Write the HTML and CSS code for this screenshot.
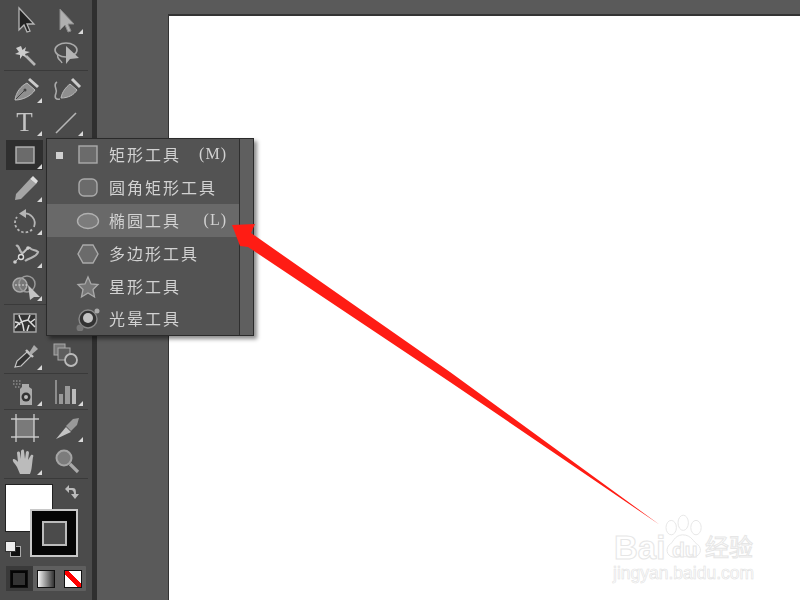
FILE: index.html
```html
<!DOCTYPE html>
<html lang="en">
<head>
  <meta charset="UTF-8" />
  <title>Tools</title>
  <link rel="stylesheet" href="styles.css">
</head>
<body>

  <div class="app">

    <!-- Toolbar -->
    <aside class="toolbar">
      <div class="tool-group">
        <div class="tool"><svg class="ico" viewBox="0 0 34 30"><path d="M11 3V25L16 20 19 27 22 26 19 19H26Z" fill="#222" stroke="#b5b5b5" stroke-width="1.3"/></svg></div>
        <div class="tool has-more"><svg class="ico" viewBox="0 0 34 30"><path d="M11 4V25L16 20 19 27 22 26 19 19H25Z" fill="#b0b0b0" stroke="#8a8a8a"/></svg></div>
        <div class="tool"><svg class="ico" viewBox="0 0 34 30"><path d="M13 8 14.500 12 18 9 17 13 22 14 17 16 19 20 14.500 17.500 12 21 12 17 7 16 11 14 8 10Z" fill="#ccc"/><path d="M18 18 27 27" stroke="#b5b5b5" stroke-width="2.600"/></svg></div>
        <div class="tool"><svg class="ico" viewBox="0 0 34 30"><ellipse cx="17" cy="12" rx="11" ry="7" fill="none" stroke="#aaa" stroke-width="1.600"/><path d="M9 16C7 21 12 22 13 25" fill="none" stroke="#aaa" stroke-width="1.500"/><path d="M17 8V26L21 21 30 20Z" fill="#b5b5b5"/></svg></div>
      </div>

      <div class="tool-group">
        <div class="tool has-more"><svg class="ico" viewBox="0 0 34 30"><path d="M7 26C8 18 13 12 19 9L27 16C23 22 15 26 7 26Z" fill="#8f8f8f" stroke="#bbb"/><path d="M21 5 30 13" stroke="#ccc" stroke-width="3"/><path d="M8 25 16 17" stroke="#444"/><circle cx="17" cy="16" r="1.500" fill="#444"/></svg></div>
        <div class="tool"><svg class="ico" viewBox="0 0 34 30"><path d="M12 24C13 18 17 13 21 10L28 16C25 21 19 24 12 24Z" fill="#8f8f8f" stroke="#bbb"/><path d="M23 5 31 13" stroke="#ccc" stroke-width="3"/><path d="M8 8C3 11 9 15 7 19 5 24 7 26 11 25" fill="none" stroke="#aaa" stroke-width="1.600"/></svg></div>
        <div class="tool has-more type-cell"><span class="type-glyph">T</span></div>
        <div class="tool has-more"><svg class="ico" viewBox="0 0 34 30"><path d="M7 26 27 6" stroke="#b5b5b5" stroke-width="1.600"/></svg></div>
        <div class="tool has-more is-active"><svg class="ico" viewBox="0 0 34 30"><rect x="8" y="7" width="18" height="16" fill="#6b6b6b" stroke="#b5b5b5" stroke-width="1.400"/></svg></div>
        <div class="tool"></div>
        <div class="tool has-more"><svg class="ico" viewBox="0 0 34 30"><path d="M8 21 22 6 28 11 13 26 7 27Z" fill="#a5a5a5"/><path d="M22 6 25 3 30 8 28 11Z" fill="#ddd"/></svg></div>
        <div class="tool"></div>
        <div class="tool has-more"><svg class="ico" viewBox="0 0 34 30"><path d="M15 7.500A10 10 0 0 1 26 21" fill="none" stroke="#b5b5b5" stroke-width="1.800"/><path d="M18 3V12L11 7.500Z" fill="#b5b5b5"/><path d="M24 23.500A10 10 0 0 1 7 17 10 10 0 0 1 9 11" fill="none" stroke="#b5b5b5" stroke-width="1.800" stroke-dasharray="2.500 2"/></svg></div>
        <div class="tool"></div>
        <div class="tool has-more"><svg class="ico" viewBox="0 0 34 30"><path d="M8 7C11 5 11 12 14 14 18 13 18 8 22 9 24 12 27 10 30 13 28 19 22 18 17 22" fill="none" stroke="#b5b5b5" stroke-width="2.200"/><path d="M7 23 20 9" stroke="#ccc"/><circle cx="13" cy="18" r="2.500" fill="#333" stroke="#ddd" stroke-width="1.400"/><circle cx="7" cy="23" r="1.800" fill="#ccc"/><circle cx="20" cy="9" r="1.800" fill="#ccc"/></svg></div>
        <div class="tool"></div>
        <div class="tool has-more"><svg class="ico" viewBox="0 0 34 30"><circle cx="12" cy="13" r="7" fill="#777" stroke="#aaa" stroke-width="1.500"/><circle cx="19" cy="12" r="8" fill="none" stroke="#999" stroke-width="1.500"/><path d="M7 13H20" stroke="#ddd" stroke-dasharray="2 1.500"/><path d="M20 13 32 25 26 25 22 28Z" fill="#c4c4c4"/></svg></div>
        <div class="tool"></div>
      </div>

      <div class="tool-group">
        <div class="tool"><svg class="ico" viewBox="0 0 34 30"><rect x="6" y="6" width="22" height="18" fill="#333" stroke="#aaa" stroke-width="1.400"/><path d="M7 20C11 14 15 13 20 12M7 14C9 14 11 15 12 17M11 7C12 12 15 13 16 23M20 12 27 19M22 7 20 12M21 17 19 23M27 11 23 14" fill="none" stroke="#ddd" stroke-width="1.500"/></svg></div>
        <div class="tool"></div>
        <div class="tool has-more"><svg class="ico" viewBox="0 0 34 30"><path d="M7 26 9 20 19 11 23 15 13 25Z" fill="#333" stroke="#c4c4c4" stroke-width="1.200"/><path d="M18 9 25 16" stroke="#c4c4c4" stroke-width="2.400"/><path d="M21 12 26 4 30 8 23 14Z" fill="#aaa"/></svg></div>
        <div class="tool"><svg class="ico" viewBox="0 0 34 30"><rect x="5" y="3" width="11" height="11" fill="#777" stroke="#aaa"/><rect x="9" y="7" width="12" height="12" fill="#5e5e5e" stroke="#aaa"/><circle cx="22" cy="19" r="6" fill="#555" stroke="#bbb" stroke-width="1.800"/></svg></div>
      </div>

      <div class="tool-group">
        <div class="tool has-more"><svg class="ico" viewBox="0 0 34 30"><path d="M14 7 H21 V10 L24 12 V28 H12 V12 L14 10Z" fill="#aaa"/><circle cx="18" cy="20" r="4.500" fill="#333"/><circle cx="18" cy="20" r="2" fill="#bbb"/><path d="M5 7H14M7 10H13M5 4H13" stroke="#aaa" stroke-dasharray="1.500 1.500"/></svg></div>
        <div class="tool has-more"><svg class="ico" viewBox="0 0 34 30"><path d="M7 3V27" stroke="#aaa" stroke-width="1.400"/><rect x="10" y="17" width="4" height="10" fill="#999"/><rect x="16" y="9" width="5" height="18" fill="#999"/><rect x="23" y="12" width="4" height="15" fill="#bbb"/></svg></div>
      </div>

      <div class="tool-group">
        <div class="tool"><svg class="ico" viewBox="0 0 34 30"><rect x="8" y="6" width="18" height="18" fill="#7a7a7a" stroke="#ccc" stroke-width="1.400"/><path d="M3 6H31M3 24H31M8 1V29M26 1V29" stroke="#c4c4c4" stroke-width="1.400" stroke-dasharray="6 16 6"/></svg></div>
        <div class="tool has-more"><svg class="ico" viewBox="0 0 34 30"><path d="M7 26 17 14 22 19Z" fill="#c4c4c4"/><path d="M17 13 24 6 30 5 28 12 22 18Z" fill="#999"/></svg></div>
        <div class="tool has-more"><svg class="ico" viewBox="0 0 34 30"><path d="M9 21C7 17 4 16 5 13 8 13 9 15 10 16L9 7C9 5 12 5 12 7L13 13 13 5C14 3 16 3 16 5L17 13 18 6C19 4 21 5 21 7L20 14 23 9C25 8 26 10 25 11 24 17 24 24 22 28H12Z" fill="#bbb"/></svg></div>
        <div class="tool"><svg class="ico" viewBox="0 0 34 30"><circle cx="15" cy="12" r="7.500" fill="#7c7c7c" stroke="#a5a5a5" stroke-width="2"/><path d="M21 18 29 26" stroke="#aaa" stroke-width="3.200"/></svg></div>
      </div>

      <!-- Fill and stroke -->
      <div class="colors">
        <div class="fill-swatch"></div>
        <div class="stroke-swatch"><div class="stroke-hole"></div></div>
        <svg class="swap-ico" viewBox="0 0 18 18"><path d="M3 6 7 2V5H11C14 5 14 8 14 11H17L13 16 9 11H12C12 9 11 7 9 7H7V10Z" fill="#bbb"/></svg>
        <svg class="default-ico" viewBox="0 0 18 18"><rect x="6.500" y="6.500" width="10" height="10" fill="#111" stroke="#aaa"/><rect x="1.500" y="1.500" width="10" height="10" fill="#eee" stroke="#333"/></svg>
      </div>

      <!-- Colour modes -->
      <div class="modes">
        <div class="mode mode-on"><div class="mode-chip chip-color"></div></div>
        <div class="mode"><div class="mode-chip chip-gradient"></div></div>
        <div class="mode"><div class="mode-chip chip-none"></div></div>
      </div>
    </aside>

    <div class="gutter"></div>

    <!-- Artboard -->
    <main class="canvas">
      <div class="page"></div>
    </main>
  </div>

  <!-- Flyout -->
  <div class="flyout">
    <ul class="flyout-list">
      <li class="flyout-row">
        <span class="bullet"></span>
        <svg class="row-ico" viewBox="0 0 24 24"><rect x="3" y="3" width="18" height="17" fill="#6b6b6b" stroke="#aaa" stroke-width="1.400"/></svg>
        <span class="row-label">矩形工具</span><span class="row-key">(M)</span>
      </li>
      <li class="flyout-row">
        <span class="bullet-off"></span>
        <svg class="row-ico" viewBox="0 0 24 24"><rect x="3" y="3" width="18" height="17" rx="5" fill="#6b6b6b" stroke="#aaa" stroke-width="1.400"/></svg>
        <span class="row-label">圆角矩形工具</span>
      </li>
      <li class="flyout-row row-hover">
        <span class="bullet-off"></span>
        <svg class="row-ico" viewBox="0 0 24 24"><ellipse cx="12" cy="12" rx="10.500" ry="7.500" fill="#7c7c7c" stroke="#b0b0b0" stroke-width="1.400"/></svg>
        <span class="row-label">椭圆工具</span><span class="row-key">(L)</span>
      </li>
      <li class="flyout-row">
        <span class="bullet-off"></span>
        <svg class="row-ico" viewBox="0 0 24 24"><path d="M7 3H17L22 12 17 21H7L2 12Z" fill="#6b6b6b" stroke="#aaa" stroke-width="1.400"/></svg>
        <span class="row-label">多边形工具</span>
      </li>
      <li class="flyout-row">
        <span class="bullet-off"></span>
        <svg class="row-ico" viewBox="0 0 24 24"><path d="M12 2 15 9 22 9.500 17 14.500 18.500 22 12 18 5.500 22 7 14.500 2 9.500 9 9Z" fill="#777" stroke="#aaa" stroke-width="1.300"/></svg>
        <span class="row-label">星形工具</span>
      </li>
      <li class="flyout-row">
        <span class="bullet-off"></span>
        <svg class="row-ico" viewBox="0 0 24 24"><circle cx="12" cy="12" r="9" fill="#333" stroke="#8a8a8a" stroke-width="1.400"/><circle cx="12" cy="11" r="5" fill="#c4c4c4"/><circle cx="21" cy="4" r="2.500" fill="#aaa"/><circle cx="4" cy="21" r="3.500" fill="#777"/></svg>
        <span class="row-label">光晕工具</span>
      </li>
    </ul>
    <div class="flyout-strip"></div>
  </div>

  <!-- Red arrow -->
  <svg class="red-arrow" viewBox="0 0 800 600">
    <polygon points="232,225 255,224 251,233 450,372 660,525 450,382 248,247 240,246" fill="#ff1c14"/>
  </svg>

  <!-- Watermark -->
  <div class="watermark">
    <svg class="paw" viewBox="0 0 60 60">
      <g fill="#fff" stroke="#e6e6e6" stroke-width="1.200">
        <ellipse cx="14" cy="17" rx="6.500" ry="9"/>
        <ellipse cx="29" cy="11" rx="6.500" ry="9.500"/>
        <ellipse cx="45" cy="17" rx="6.500" ry="9"/>
        <path d="M28 26C40 26 42 36 47 38 54 44 50 54 40 54 34 54 28 52 20 54 10 55 6 46 11 39 17 36 17 27 28 26Z"/>
      </g>
    </svg>
    <span class="wm-bai">Bai</span>
    <span class="wm-du">du</span>
    <span class="wm-cn">经验</span>
    <span class="wm-url">jingyan.baidu.com</span>
  </div>

</body>
</html>
```

FILE: styles.css
```css
/* === Body === */
body {
  margin: 0;
  width: 800px;
  height: 600px;
  overflow: hidden;
  position: relative;
  font-family: 'Noto Sans CJK SC', 'Noto Sans', sans-serif;
  background: #5a5a5a;
}

.app {
  display: flex;
  height: 600px;
}

/* === Toolbar === */
.toolbar {
  width: 92px;
  flex: none;
  box-sizing: border-box;
  padding: 3px 4px 0;
  background: #4b4b4b;
  filter: blur(0.5px);
}

.tool-group {
  display: grid;
  grid-template-columns: 41px 41px;
  grid-auto-rows: 33px;
  padding-bottom: 1px;
  margin-bottom: 1px;
  border-bottom: 1px solid #3a3a3a;
}

.tool {
  position: relative;
  display: flex;
  align-items: center;
  justify-content: center;
}

.tool.has-more::after {
  content: "";
  position: absolute;
  right: 3px;
  bottom: 2px;
  border-style: solid;
  border-width: 0 0 5px 5px;
  border-color: transparent transparent #d8d8d8 transparent;
}

.tool.is-active {
  background: #2f2f2f;
  margin: 2px 2px 1px;
}

.tool.is-active.has-more::after {
  right: 1px;
  bottom: 1px;
}

.ico {
  width: 34px;
  height: 30px;
}

.type-glyph {
  font-family: 'Liberation Serif', serif;
  font-size: 27px;
  line-height: 30px;
  color: #c4c4c4;
}

/* === Fill and stroke === */
.colors {
  position: relative;
  height: 84px;
}

.fill-swatch {
  position: absolute;
  left: 1px;
  top: 4px;
  width: 46px;
  height: 46px;
  background: #fff;
  border: 1px solid #222;
}

.stroke-swatch {
  position: absolute;
  left: 26px;
  top: 29px;
  width: 44px;
  height: 44px;
  background: #050505;
  border: 2px solid #c8c8c8;
  display: flex;
  align-items: center;
  justify-content: center;
}

.stroke-hole {
  width: 21px;
  height: 21px;
  background: #4b4b4b;
  border: 2px solid #bbb;
}

.swap-ico {
  position: absolute;
  left: 58px;
  top: 3px;
  width: 18px;
  height: 18px;
}

.default-ico {
  position: absolute;
  left: 0;
  top: 60px;
  width: 18px;
  height: 18px;
}

/* === Colour modes === */
.modes {
  display: flex;
  margin: 2px 2px 0;
  width: 80px;
  height: 25px;
  background: #5f5f5f;
  border-radius: 1px;
}

.mode {
  flex: 1;
  display: flex;
  align-items: center;
  justify-content: center;
}

.mode-on {
  background: #3a3a3a;
}

.mode-chip {
  width: 16px;
  height: 16px;
  border: 1px solid #111;
}

.chip-color {
  background: #333;
  box-shadow: inset 0 0 0 2px #050505;
}

.chip-gradient {
  background: linear-gradient(90deg, #f4f4f4, #333);
}

.chip-none {
  background: linear-gradient(135deg, #fff 38%, #f00 38%, #f00 62%, #fff 62%);
  transform: scaleX(-1);
}

/* === Gutter and artboard === */
.gutter {
  width: 5px;
  flex: none;
  background: #2f2f2f;
}

.canvas {
  flex: 1;
  padding: 14px 0 0 71px;
  background: #5a5a5a;
}

.page {
  height: 100%;
  background: #fff;
  border-top: 2px solid #333;
  border-left: 1px solid #333;
  box-sizing: border-box;
}

/* === Flyout === */
.flyout {
  position: absolute;
  left: 46px;
  top: 138px;
  width: 208px;
  height: 198px;
  box-sizing: border-box;
  display: flex;
  background: #535353;
  border: 1px solid #2a2a2a;
  box-shadow: 3px 3px 4px rgba(0, 0, 0, 0.45);
}

.flyout-list {
  flex: 1;
  list-style: none;
  margin: 0;
  padding: 0;
}

.flyout-row {
  display: flex;
  align-items: center;
  height: 33px;
  padding: 0 12px 0 9px;
  color: #d2d2d2;
}

.flyout-row:first-child {
  height: 32px;
}

.flyout-row:last-child {
  height: 32px;
}

.row-hover {
  background: #696969;
}

.bullet,
.bullet-off {
  width: 7px;
  height: 7px;
  flex: none;
  margin-right: 13px;
}

.bullet {
  background: #d0d0d0;
}

.row-ico {
  width: 24px;
  height: 24px;
  flex: none;
  margin-right: 9px;
}

.row-label {
  font-size: 16px;
  line-height: 20px;
  letter-spacing: 2px;
  margin-top: -2px;
  filter: blur(0.4px);
}

.row-key {
  margin-left: auto;
  margin-top: -2px;
  font-family: 'Liberation Serif', serif;
  font-size: 16px;
  letter-spacing: 1px;
  filter: blur(0.4px);
}

.flyout-strip {
  width: 13px;
  flex: none;
  background: #5f5f5f;
  border-left: 1px solid #2f2f2f;
}

/* === Red arrow === */
.red-arrow {
  position: absolute;
  left: 0;
  top: 0;
  width: 800px;
  height: 600px;
}

/* === Watermark === */
.watermark {
  position: absolute;
  left: 610px;
  top: 510px;
  width: 180px;
  height: 85px;
  color: #fff;
  -webkit-text-stroke: 1px #e6e6e6;
}

.watermark span {
  position: absolute;
  line-height: 1;
}

.paw {
  position: absolute;
  left: 50px;
  top: 3px;
  width: 48px;
  height: 50px;
}

.wm-bai {
  left: 4px;
  top: 21px;
  font-family: 'Liberation Sans', sans-serif;
  font-size: 33px;
  font-weight: 700;
}

.wm-du {
  left: 62px;
  top: 29px;
  font-family: 'Liberation Sans', sans-serif;
  font-size: 21px;
  font-weight: 700;
}

.wm-cn {
  left: 95px;
  top: 24px;
  font-size: 24px;
}

.wm-url {
  left: 3px;
  top: 55px;
  font-family: 'Liberation Sans', sans-serif;
  font-size: 17.500px;
  -webkit-text-stroke: 0.6px #e2e2e2;
}
```
